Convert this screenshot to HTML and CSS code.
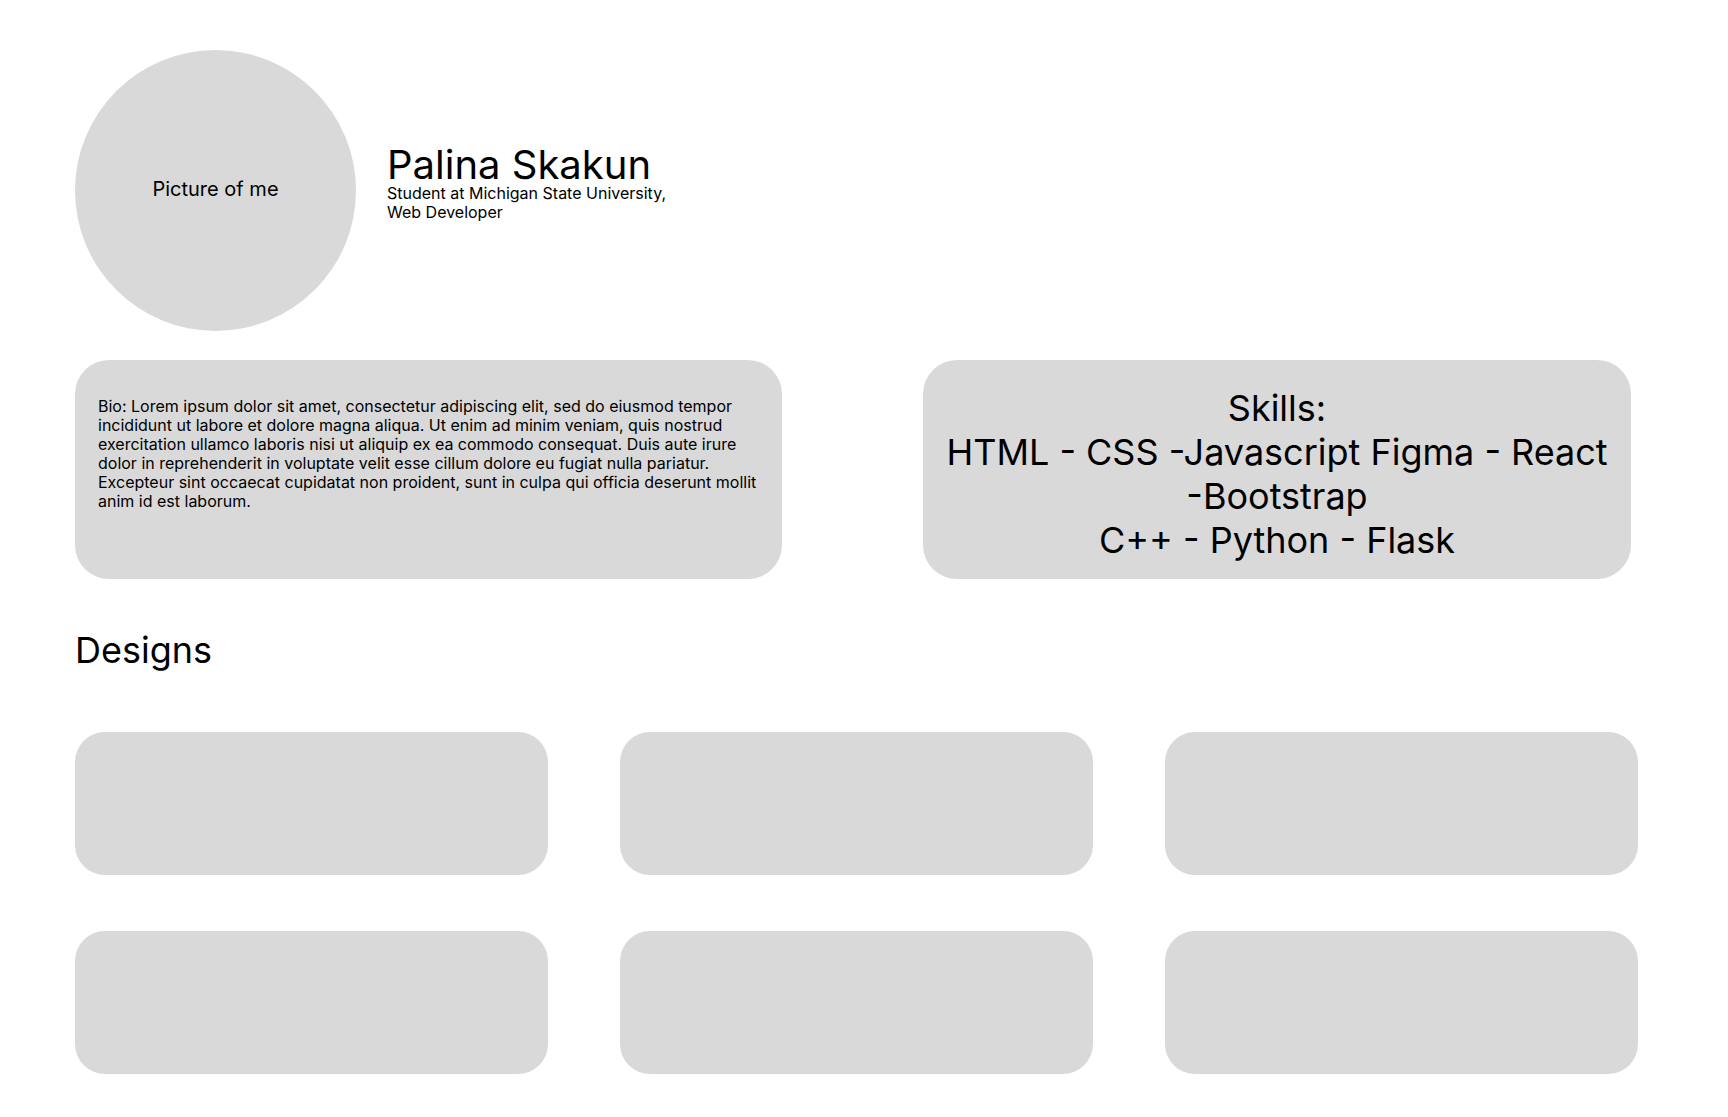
FILE: index.html
```html
<!DOCTYPE html>
<html lang="en">
<head>
<meta charset="utf-8">
<title>Palina Skakun</title>
<link rel="stylesheet" href="styles.css">
</head>
<body>
<main class="page">
  <header class="hero">
    <div class="avatar">Picture of me</div>
    <div class="intro">
      <h1 class="name">Palina Skakun</h1>
      <p class="role">Student at Michigan State University,<br>Web Developer</p>
    </div>
  </header>

  <section class="info">
    <div class="card bio">
      <p class="bio-text">Bio: Lorem ipsum dolor sit amet, consectetur adipiscing elit, sed do eiusmod tempor incididunt ut labore et dolore magna aliqua. Ut enim ad minim veniam, quis nostrud exercitation ullamco laboris nisi ut aliquip ex ea commodo consequat. Duis aute irure dolor in reprehenderit in voluptate velit esse cillum dolore eu fugiat nulla pariatur. Excepteur sint occaecat cupidatat non proident, sunt in culpa qui officia deserunt mollit anim id est laborum.</p>
    </div>
    <div class="card skills">
      <p class="skills-text">Skills:<br>HTML - CSS -Javascript Figma - React -Bootstrap<br>C++ - Python - Flask</p>
    </div>
  </section>

  <section class="designs">
    <h2 class="designs-title">Designs</h2>
    <div class="design-grid">
      <div class="design-card"></div>
      <div class="design-card"></div>
      <div class="design-card"></div>
      <div class="design-card"></div>
      <div class="design-card"></div>
      <div class="design-card"></div>
    </div>
  </section>
</main>
</body>
</html>
```

FILE: styles.css
```css
* {
  box-sizing: border-box;
}

html, body {
  margin: 0;
  padding: 0;
  background: #ffffff;
}

body {
  font-family: Inter, "Noto Sans", "Liberation Sans", sans-serif;
  color: #000000;
}

.page {
  padding: 50px 0 40px 75px;
  width: 1728px;
}

.hero {
  display: flex;
  align-items: flex-start;
  gap: 31px;
  height: 281px;
}

.avatar {
  width: 281px;
  height: 281px;
  border-radius: 50%;
  background: #d9d9d9;
  display: flex;
  align-items: center;
  justify-content: center;
  padding-bottom: 4px;
  font-size: 20px;
  flex-shrink: 0;
}

.intro {
  padding-top: 95px;
}

.name {
  margin: 0;
  font-size: 40px;
  font-weight: 400;
  line-height: 39px;
}

.role {
  margin: 0;
  font-size: 16px;
  line-height: 19px;
}

.info {
  display: flex;
  gap: 141px;
  margin-top: 29px;
}

.card {
  background: #d9d9d9;
  border-radius: 34px;
  height: 219px;
}

.bio {
  width: 707px;
  padding: 37px 22px 0 23px;
}

.bio-text {
  margin: 0;
  font-size: 16px;
  line-height: 19px;
}

.skills {
  width: 708px;
  padding: 26px 20px 0 20px;
}

.skills-text {
  margin: 0;
  text-align: center;
  font-size: 36px;
  line-height: 44px;
}

.designs {
  margin-top: 49px;
}

.designs-title {
  margin: 0;
  font-size: 36px;
  font-weight: 400;
  line-height: 44px;
}

.design-grid {
  display: grid;
  grid-template-columns: repeat(3, 473px);
  grid-auto-rows: 143px;
  column-gap: 72px;
  row-gap: 56px;
  margin-top: 60px;
}

.design-card {
  background: #d9d9d9;
  border-radius: 30px;
}
```
